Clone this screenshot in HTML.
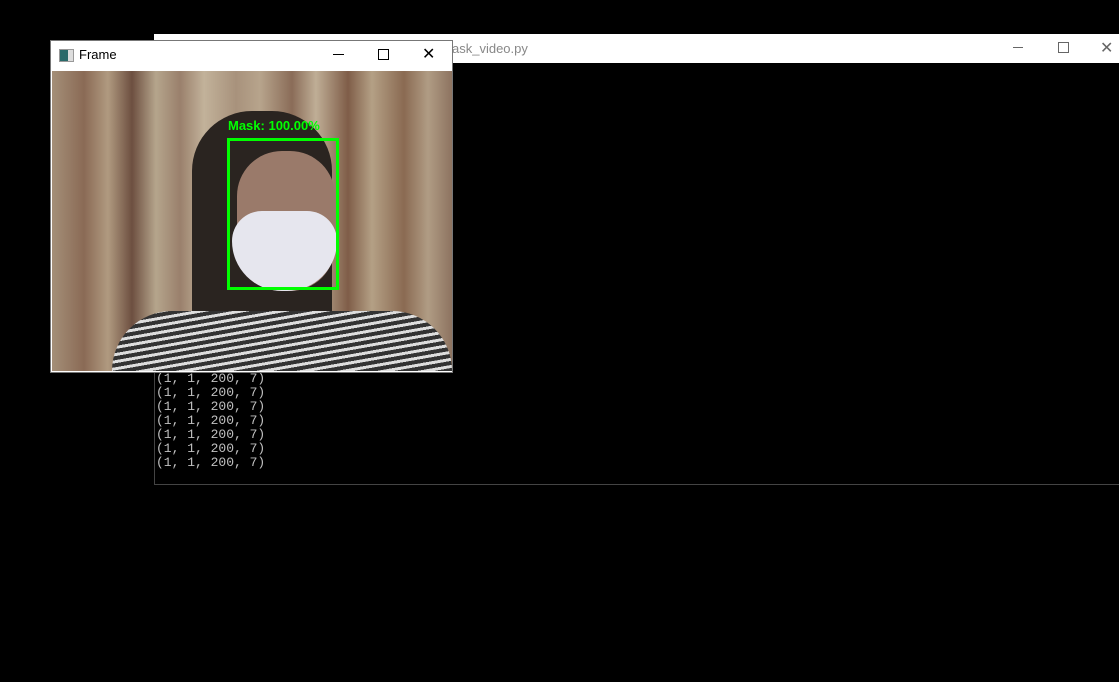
<!DOCTYPE html><html><head><style>
body{margin:0;width:1119px;height:682px;background:#000;position:relative;overflow:hidden;font-family:"Liberation Sans",sans-serif}
.con{position:absolute;left:154px;top:34px;width:965px;height:450px;border:1px solid #444;border-right:none;border-top:none;background:#000}
.ctb{position:absolute;left:154px;top:34px;width:965px;height:29px;background:#fff}
.ctt{position:absolute;left:452px;top:41px;font-size:13px;color:#888}
.out{position:absolute;left:156px;top:372px;font-family:"Liberation Mono",monospace;font-size:13px;line-height:14px;color:#c0c0c0;white-space:pre}
.fr{position:absolute;left:50px;top:40px;width:401px;height:331px;border:1px solid #777;background:#fff}
.img{position:absolute;left:1px;top:30px;width:400px;height:300px;background:
linear-gradient(90deg,#a48f78 0,#8a6a55 8%,#b09a80 14%,#6d4f40 20%,#b5a58c 26%,#9a806c 32%,#c2b29a 38%,#a8927c 46%,#b7a48c 52%,#8a6c58 60%,#bfae96 66%,#7f5d48 74%,#b4a085 80%,#8a6a52 88%,#b09c84 94%,#8d7360 100%)}
.g{position:absolute}
</style></head><body>
<div class="con"></div>
<div class="ctb"></div>
<div class="ctt">ask_video.py</div>
<div class="g" style="left:1013px;top:47px;width:10px;height:1px;background:#666"></div>
<div class="g" style="left:1058px;top:42px;width:9px;height:9px;border:1px solid #666"></div>
<div class="g" style="left:1100px;top:38px;font-size:16px;color:#666">✕</div>
<div class="out">(1, 1, 200, 7)
(1, 1, 200, 7)
(1, 1, 200, 7)
(1, 1, 200, 7)
(1, 1, 200, 7)
(1, 1, 200, 7)
(1, 1, 200, 7)</div>
<div class="fr">
<div class="g" style="left:8px;top:8px;width:13px;height:11px;border:1px solid #999;background:linear-gradient(90deg,#2a6a6a 60%,#ddd 60%)"></div>
<div class="g" style="left:28px;top:6px;font-size:13px;color:#000">Frame</div>
<div class="g" style="left:282px;top:13px;width:11px;height:1px;background:#000"></div>
<div class="g" style="left:327px;top:8px;width:9px;height:9px;border:1px solid #000"></div>
<div class="g" style="left:371px;top:3px;font-size:16px;color:#000">✕</div>
<div class="img">
<div class="g" style="left:140px;top:40px;width:140px;height:220px;background:#2a2420;border-radius:60px 60px 10px 10px"></div>
<div class="g" style="left:60px;top:240px;width:340px;height:60px;background:repeating-linear-gradient(170deg,#ddd 0,#ddd 3px,#333 3px,#333 7px);border-radius:80px 80px 0 0"></div>
<div class="g" style="left:185px;top:80px;width:98px;height:140px;background:#9a7a6a;border-radius:45px"></div>
<div class="g" style="left:180px;top:140px;width:105px;height:80px;background:#e6e6ee;border-radius:30px 30px 50px 50px"></div>
<div class="g" style="left:175px;top:67px;width:106px;height:146px;border:3px solid #0f0"></div>
<div class="g" style="left:176px;top:47px;font-size:13px;font-weight:bold;color:#0f0">Mask: 100.00%</div>
</div></div>
</body></html>
